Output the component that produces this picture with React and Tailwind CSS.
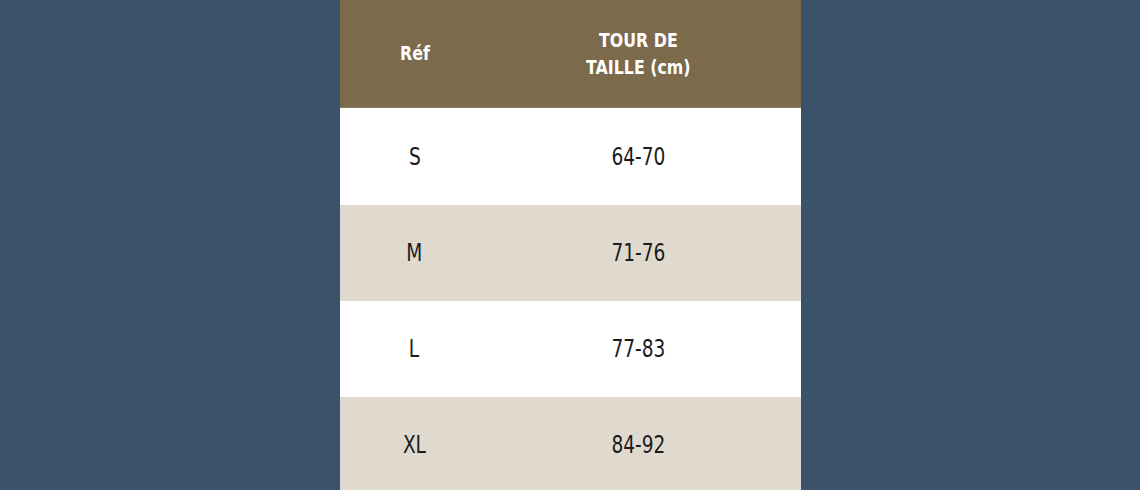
import React from "react";

const rows = [
  { ref: "S", size: "64-70", bg: "bg-white", h: "h-[97px]" },
  { ref: "M", size: "71-76", bg: "bg-[#dfd9ce]", h: "h-[96px]" },
  { ref: "L", size: "77-83", bg: "bg-white", h: "h-[96px]" },
  { ref: "XL", size: "84-92", bg: "bg-[#dfd9ce]", h: "h-[96px]" },
];

export default function App() {
  return (
    <div className="w-[1140px] h-[490px] bg-[#3a536b] flex justify-center overflow-hidden">
      <div className="w-[461px] flex flex-col font-['DejaVu_Sans_Condensed',sans-serif]">
        {/* Header */}
        <div className="h-[108px] shrink-0 bg-[#7b6a4b] border-b border-[#8d7d60] grid grid-cols-[150px_298px_1fr] items-center text-white font-bold text-[20px] leading-[27px]">
          <div className="text-center">
            <span className="inline-block scale-x-[0.88]">Réf</span>
          </div>
          <div className="text-center">
            <span className="inline-block scale-x-[0.88]">
              TOUR DE
              <br />
              TAILLE (cm)
            </span>
          </div>
          <div />
        </div>

        {rows.map((r) => (
          <div
            key={r.ref}
            className={`${r.h} shrink-0 grid grid-cols-[150px_298px_1fr] items-center text-[#1b1b1b] text-[24px] ${r.bg}`}
          >
            <div className="text-center">
              <span className="inline-block scale-x-[0.86]">{r.ref}</span>
            </div>
            <div className="text-center">
              <span className="inline-block scale-x-[0.86]">{r.size}</span>
            </div>
            <div />
          </div>
        ))}
      </div>
    </div>
  );
}
